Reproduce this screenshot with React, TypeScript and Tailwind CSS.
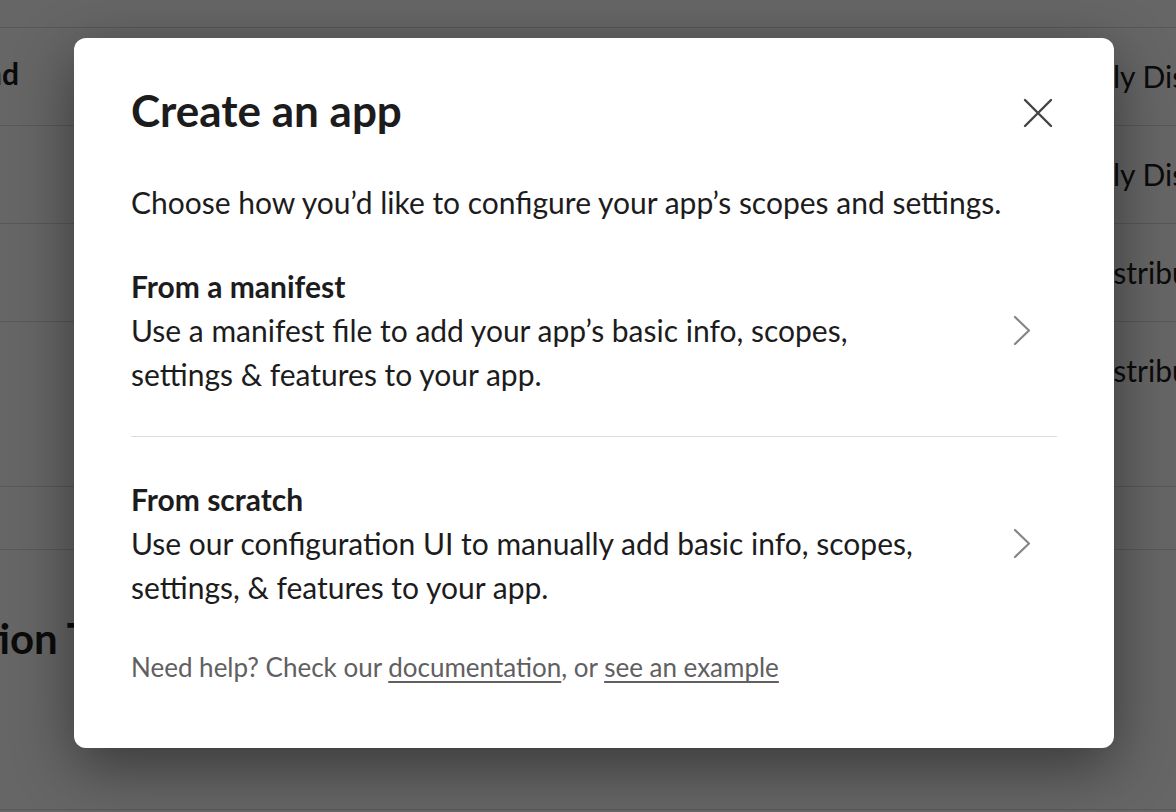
const font = { fontFamily: 'Lato, "Noto Sans", "Liberation Sans", sans-serif' };

// rows of the settings page that sit behind the dialog
const rows = [
  { h: 'h-[98px]', left: 'Background', right: 'Publicly Distributed', gap: 'w-[1014px]', align: 'items-center' },
  { h: 'h-[98px]', left: '', right: 'Publicly Distributed', gap: 'w-[1014px]', align: 'items-center' },
  { h: 'h-[98px]', left: '', right: 'Not Distributed', gap: 'w-[1007px]', align: 'items-center' },
  { h: 'h-[165px]', left: '', right: 'Not Distributed', gap: 'w-[1007px]', align: 'items-start pt-[26px]' },
];

function Chevron() {
  return (
    <svg width="18" height="31" viewBox="0 0 18 31" fill="none" className="mr-[26px] shrink-0">
      <path d="M2 2 L16 15.5 L2 29" stroke="#868686" strokeWidth="2.2" strokeLinecap="round" strokeLinejoin="round" />
    </svg>
  );
}

function Option({ title, lines, last }: { title: string; lines: string[]; last?: boolean }) {
  return (
    <button
      type="button"
      className={`w-full flex items-center text-left py-10 cursor-pointer ${last ? '' : 'border-b border-[#dddddd]'}`}
    >
      <div className="flex-1 flex flex-col">
        <p className="text-[30px] leading-[44px] font-bold text-[#1d1c1d]">{title}</p>
        <p className="text-[30px] leading-[44px] text-[#1d1c1d]">
          {lines.map((l, i) => (
            <span key={i} className="block">
              {l}
            </span>
          ))}
        </p>
      </div>
      <Chevron />
    </button>
  );
}

export default function App() {
  return (
    <div className="relative w-[1176px] h-[812px] overflow-hidden bg-white" style={font}>
      {/* page behind */}
      <div className="flex flex-col">
        <div className="h-[28px] border-b border-[#dddddd]" />
        {rows.map((r, i) => (
          <div key={i} className={`${r.h} flex ${r.align} border-b border-[#dddddd]`}>
            <div className="w-[19px] shrink-0 mb-[6px] flex justify-end whitespace-nowrap">
              <span className="text-[30px] font-bold text-[#1d1c1d]">{r.left}</span>
            </div>
            <div className={`${r.gap} shrink-0`} />
            <div className="shrink-0 whitespace-nowrap text-[30px] text-[#1d1c1d]">{r.right}</div>
          </div>
        ))}
        <div className="h-[63px] border-b border-[#dddddd]" />
        <div className="h-[260px] flex items-start pt-[57px] border-b border-[#dddddd]">
          <div className="w-[164px] shrink-0 flex justify-end whitespace-nowrap">
            <span className="text-[42px] font-bold text-[#1d1c1d]">Distribution Tools</span>
          </div>
        </div>
      </div>

      {/* overlay + dialog */}
      <div className="absolute inset-0 bg-black/60">
        <div className="ml-[74px] mt-[38px] w-[1040px] h-[710px] bg-white rounded-[12px] shadow-[0_18px_60px_rgba(0,0,0,0.45)] px-[57px] pt-[50px] flex flex-col">
          <div className="h-[44px] flex items-center justify-between">
            <h1 className="text-[44px] leading-[44px] font-bold text-[#1d1c1d]">Create an app</h1>
            <button type="button" className="w-[40px] h-[40px] mr-[-1px] mt-[3px] -mb-[3px] flex items-center justify-center">
              <svg width="30" height="30" viewBox="0 0 30 30" fill="none">
                <path d="M2 2 L28 28 M28 2 L2 28" stroke="#454245" strokeWidth="2.4" strokeLinecap="round" />
              </svg>
            </button>
          </div>
          <p className="mt-[48px] text-[30px] leading-[44px] text-[#1d1c1d]">
            Choose how you’d like to configure your app’s scopes and settings.
          </p>
          <div className="flex flex-col">
            <Option
              title="From a manifest"
              lines={['Use a manifest file to add your app’s basic info, scopes,', 'settings & features to your app.']}
            />
            <Option
              title="From scratch"
              lines={['Use our configuration UI to manually add basic info, scopes,', 'settings, & features to your app.']}
              last
            />
          </div>
          <p className="text-[26px] leading-[36px] text-[#616061]">
            Need help? Check our <a className="underline underline-offset-4">documentation</a>, or{' '}
            <a className="underline underline-offset-4">see an example</a>
          </p>
        </div>
      </div>
    </div>
  );
}
